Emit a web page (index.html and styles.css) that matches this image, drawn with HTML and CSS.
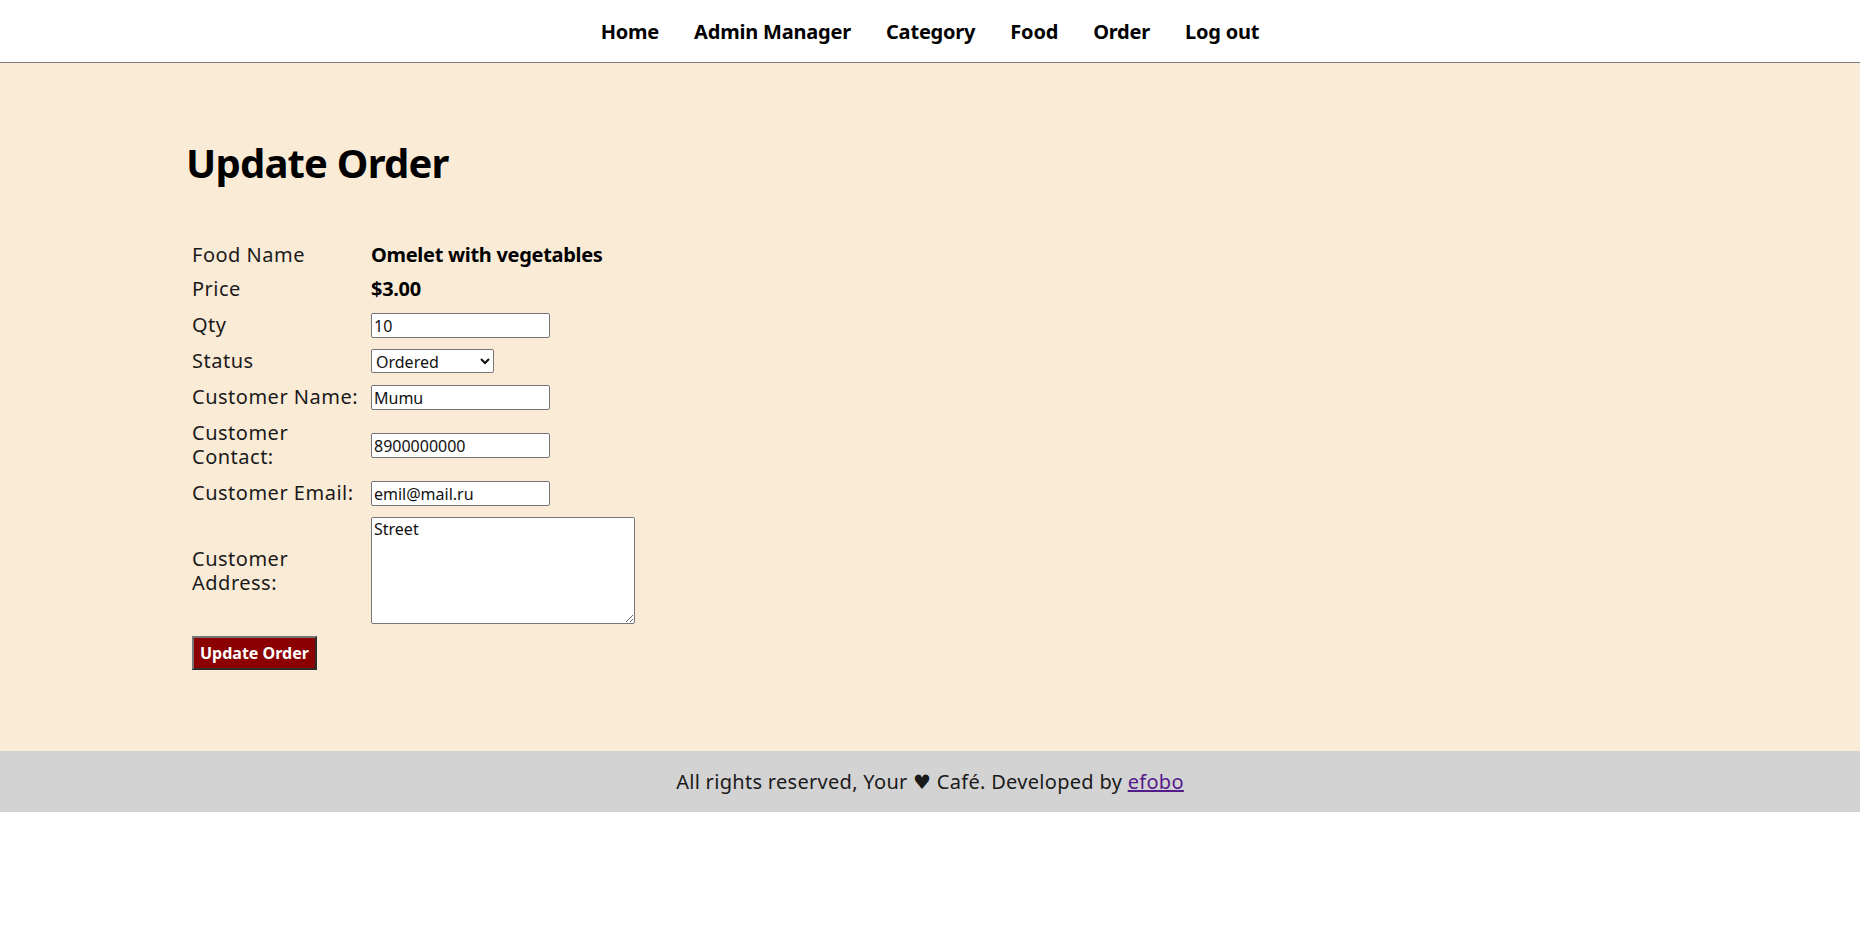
FILE: index.html
```html
<!DOCTYPE html>
<html lang="en">
<head>
<meta charset="utf-8">
<title>Update Order</title>
<link rel="stylesheet" href="styles.css">
</head>
<body>
<header class="site-header">
  <nav class="menu">
    <a href="#">Home</a>
    <a href="#">Admin Manager</a>
    <a href="#">Category</a>
    <a href="#">Food</a>
    <a href="#">Order</a>
    <a href="#">Log out</a>
  </nav>
</header>

<main class="main-content">
  <div class="wrapper">
    <h1 class="page-title">Update Order</h1>
    <form class="order-form">
      <table class="form-table">
        <tr>
          <td class="label">Food Name</td>
          <td class="value"><b>Omelet with vegetables</b></td>
        </tr>
        <tr>
          <td class="label">Price</td>
          <td class="value"><b>$3.00</b></td>
        </tr>
        <tr>
          <td class="label">Qty</td>
          <td class="value"><input class="text-input" type="number" value="10"></td>
        </tr>
        <tr>
          <td class="label">Status</td>
          <td class="value">
            <select class="select-input">
              <option selected>Ordered</option>
              <option>On Delivery</option>
              <option>Delivered</option>
              <option>Cancelled</option>
            </select>
          </td>
        </tr>
        <tr>
          <td class="label">Customer Name:</td>
          <td class="value"><input class="text-input" type="text" value="Mumu"></td>
        </tr>
        <tr>
          <td class="label">Customer Contact:</td>
          <td class="value"><input class="text-input" type="text" value="8900000000"></td>
        </tr>
        <tr>
          <td class="label">Customer Email:</td>
          <td class="value"><input class="text-input" type="text" value="emil@mail.ru"></td>
        </tr>
        <tr>
          <td class="label">Customer Address:</td>
          <td class="value"><textarea class="area-input">Street</textarea></td>
        </tr>
        <tr>
          <td class="submit-cell" colspan="2"><button class="btn-submit" type="button">Update Order</button></td>
        </tr>
      </table>
    </form>
  </div>
</main>

<footer class="site-footer">
  <p class="footer-text">All rights reserved, Your ♥ Café. Developed by <a href="#" class="footer-link">efobo</a></p>
</footer>
</body>
</html>
```

FILE: styles.css
```css
html, body {
  margin: 0;
  padding: 0;
  background: #ffffff;
}

body {
  font-family: "Noto Sans", "DejaVu Sans", sans-serif;
  font-size: 20px;
  color: #111111;
}

/* header */
.site-header {
  height: 62px;
  border-bottom: 1px solid #808080;
  background: #ffffff;
  display: flex;
  align-items: center;
  justify-content: center;
}

.menu {
  display: flex;
  gap: 35px;
  padding-top: 1px;
}

.menu a {
  color: #000000;
  text-decoration: none;
  font-weight: 700;
  font-size: 20px;
  letter-spacing: -0.2px;
}

/* main */
.main-content {
  background: #faebd7;
  padding: 76px 0 76px;
}

.wrapper {
  width: 80%;
  margin: 0 auto;
}

.page-title {
  margin: 0 0 51px;
  font-size: 40px;
  line-height: 48px;
  font-weight: 700;
  letter-spacing: -0.8px;
  color: #000000;
}

.order-form {
  margin: 0;
}

.form-table {
  border-collapse: separate;
  border-spacing: 0;
}

.form-table td {
  padding: 5px;
  line-height: 24px;
  vertical-align: middle;
}

.form-table .label {
  width: 170px;
  padding-left: 6px;
  padding-right: 4px;
  letter-spacing: 0.5px;
  color: #1a1a1a;
}

.form-table .value b {
  font-weight: 700;
  letter-spacing: -0.3px;
  color: #000000;
}

.text-input {
  display: block;
  box-sizing: border-box;
  width: 179px;
  height: 25px;
  margin: 2px 0 1px;
  padding: 1px 2px;
  border: 1px solid #767676;
  border-radius: 2px;
  background: #ffffff;
  font-family: "Noto Sans", "DejaVu Sans", sans-serif;
  font-size: 16px;
  color: #111111;
  -moz-appearance: textfield;
}

.text-input::-webkit-outer-spin-button,
.text-input::-webkit-inner-spin-button {
  -webkit-appearance: none;
  margin: 0;
}

.select-input {
  display: block;
  box-sizing: border-box;
  width: 123px;
  height: 24px;
  border: 1px solid #767676;
  border-radius: 2px;
  background: #ffffff;
  font-family: "Noto Sans", "DejaVu Sans", sans-serif;
  font-size: 16px;
  color: #111111;
}

.area-input {
  display: block;
  box-sizing: border-box;
  width: 264px;
  height: 107px;
  margin: 0;
  padding: 1px 2px;
  border: 1px solid #767676;
  border-radius: 2px;
  background: #ffffff;
  font-family: "Noto Sans", "DejaVu Sans", sans-serif;
  font-size: 16px;
  line-height: 20px;
  color: #111111;
}

.submit-cell {
  padding-top: 7px !important;
  padding-left: 6px !important;
}

.btn-submit {
  display: block;
  box-sizing: border-box;
  height: 34px;
  padding: 0 6px;
  background: #8b0000;
  color: #ffffff;
  font-family: "Noto Sans", "DejaVu Sans", sans-serif;
  font-size: 16px;
  font-weight: 700;
  line-height: 28px;
  border-style: solid;
  border-width: 2px;
  border-color: #767676 #2b2b2b #2b2b2b #767676;
  cursor: pointer;
}

/* footer */
.site-footer {
  background: #d3d3d3;
  height: 61px;
  display: flex;
  align-items: center;
  justify-content: center;
}

.footer-text {
  margin: 0;
  font-size: 20px;
  letter-spacing: 0.3px;
  color: #1a1a1a;
}

.footer-link {
  color: #551a8b;
  text-decoration: underline;
}
```
